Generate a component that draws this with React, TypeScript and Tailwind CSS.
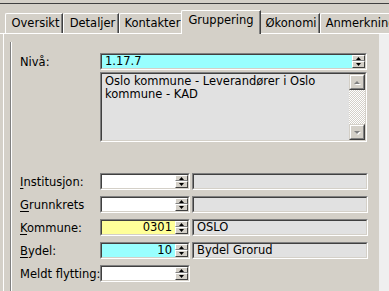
import type { ReactNode } from 'react'

const tabs = [
  { name: 'Oversikt', w: 'w-[58px]' },
  { name: 'Detaljer', w: 'w-[56px]' },
  { name: 'Kontakter', w: 'w-[64px]' },
  { name: 'Gruppering', w: 'w-[80px]', active: true },
  { name: 'Økonomi', w: 'w-[61px]' },
  { name: 'Anmerkninger', w: 'w-[90px]' },
]

function Sunken({ className, children }: { className: string; children?: ReactNode }) {
  return (
    <div className={`border border-t-[#808080] border-l-[#808080] border-r-white border-b-white ${className}`}>
      <div className="flex h-full border border-t-[#404040] border-l-[#404040] border-r-[#d4d0c8] border-b-[#d4d0c8]">
        {children}
      </div>
    </div>
  )
}

function Arrow({ up, color = '#000' }: { up?: boolean; color?: string }) {
  return (
    <svg width="5" height="3" viewBox="0 0 5 3">
      <path d={up ? 'M2.5 0L5 3H0Z' : 'M0 0H5L2.5 3Z'} fill={color} />
    </svg>
  )
}

function SpinButtons() {
  return (
    <div className="flex w-[13px] flex-col">
      <div className="flex h-[6px] items-center justify-center border border-t-white border-l-white border-r-[#404040] border-b-[#808080] bg-[#d4d0c8]">
        <Arrow up />
      </div>
      <div className="flex flex-1 items-center justify-center border border-t-white border-l-white border-r-[#404040] border-b-[#404040] bg-[#d4d0c8]">
        <Arrow />
      </div>
    </div>
  )
}

function SpinField({ value = '', bg = 'bg-white' }: { value?: string; bg?: string }) {
  return (
    <Sunken className={`h-[17px] w-[90px] ${bg}`}>
      <div className="flex flex-1 items-center justify-end pr-[3px] leading-[13px]">{value}</div>
      <SpinButtons />
    </Sunken>
  )
}

function Desc({ value = '' }: { value?: string }) {
  return (
    <Sunken className="ml-[2px] h-[17px] w-[176px] bg-[#e1e1e1]">
      <div className="flex flex-1 items-center pl-[3px] leading-[13px]">{value}</div>
    </Sunken>
  )
}

function ScrollButton({ up }: { up?: boolean }) {
  return (
    <div className="flex h-[16px] items-center justify-center border border-t-[#d4d0c8] border-l-[#d4d0c8] border-r-[#404040] border-b-[#404040] bg-[#d4d0c8]">
      <div className="flex h-full w-full items-center justify-center border border-t-white border-l-white border-r-[#808080] border-b-[#808080]">
        <svg width="8" height="5" viewBox="0 0 8 5">
          <path d={up ? 'M4 1L7 4H1Z' : 'M1 1H7L4 4Z'} fill="#fff" transform="translate(1 1)" />
          <path d={up ? 'M4 1L7 4H1Z' : 'M1 1H7L4 4Z'} fill="#808080" />
        </svg>
      </div>
    </div>
  )
}

const rows = [
  { label: 'Institusjon:', key: 'I', rest: 'nstitusjon:' },
  { label: 'Grunnkrets', key: 'G', rest: 'runnkrets' },
  { label: 'Kommune:', key: 'K', rest: 'ommune:', value: '0301', bg: 'bg-[#ffff99]', desc: 'OSLO' },
  { label: 'Bydel:', key: 'B', rest: 'ydel:', value: '10', bg: 'bg-[#99ffff]', desc: 'Bydel Grorud' },
]

export default function App() {
  return (
    <div className="h-[291px] w-[389px] overflow-hidden bg-[#d4d0c8] font-['DejaVu_Sans',sans-serif] text-[11.5px] leading-[14px] text-black">
      <div className="h-[3px]" />
      <div className="h-px bg-[#404040]" />

      {/* faner */}
      <div className="flex h-[29px] items-end pl-[5px]">
        {tabs.map((t) =>
          t.active ? (
            <div
              key={t.name}
              className={`relative z-10 -mx-[2px] -mb-px h-[24px] shrink-0 ${t.w} rounded-tl-[2px] border-t border-l border-r border-t-white border-l-white border-r-[#404040] bg-[#d4d0c8] pt-[2px] text-center shadow-[inset_-1px_0_#808080]`}
            >
              {t.name}
            </div>
          ) : (
            <div
              key={t.name}
              className={`h-[20px] shrink-0 ${t.w} overflow-hidden whitespace-nowrap rounded-tl-[2px] border-t border-l border-r border-t-white border-l-white border-r-[#404040] pt-[2px] pl-[3px] text-center shadow-[inset_-1px_0_#808080]`}
            >
              {t.name}
            </div>
          )
        )}
      </div>

      <div className="flex h-[258px] border-t border-white">
        <div className="ml-[3px] w-[376px] border-l border-white pt-[8px] pl-[6px]">
          <div className="h-full border-l border-[#808080] pt-[11px] pl-[9px] shadow-[inset_1px_0_#fff]">
            {/* Nivå */}
            <div className="flex">
              <div className="flex h-[17px] w-[80px] items-center">Nivå:</div>
              <div className="flex flex-col gap-[2px]">
                <Sunken className="h-[17px] w-[267px] bg-[#99ffff]">
                  <div className="flex flex-1 items-center pl-[3px] leading-[13px]">1.17.7</div>
                  <SpinButtons />
                </Sunken>
                <Sunken className="h-[70px] w-[267px] bg-[#e1e1e1]">
                  <div className="flex-1 whitespace-nowrap pt-[1px] pl-[3px] leading-[13px]">
                    Oslo kommune - Leverandører i Oslo
                    <br />
                    kommune - KAD
                  </div>
                  <div className="flex w-[16px] flex-col">
                    <ScrollButton up />
                    <div className="flex-1 bg-[repeating-conic-gradient(#fff_0_25%,#d4d0c8_0_50%)] bg-[length:2px_2px]" />
                    <ScrollButton />
                  </div>
                </Sunken>
              </div>
            </div>

            {/* felter */}
            <div className="mt-[31px] flex flex-col gap-[6px]">
              {rows.map((r) => (
                <div key={r.label} className="flex h-[17px] items-center">
                  <div className="w-[80px]">
                    <span className="underline underline-offset-2">{r.key}</span>
                    {r.rest}
                  </div>
                  <SpinField value={r.value} bg={r.bg} />
                  <Desc value={r.desc} />
                </div>
              ))}
              <div className="flex h-[17px] items-center">
                <div className="w-[80px] whitespace-nowrap">Meldt flytting:</div>
                <SpinField />
              </div>
            </div>
          </div>
        </div>
        <div className="flex-1 bg-[#efefef]" />
      </div>
    </div>
  )
}
